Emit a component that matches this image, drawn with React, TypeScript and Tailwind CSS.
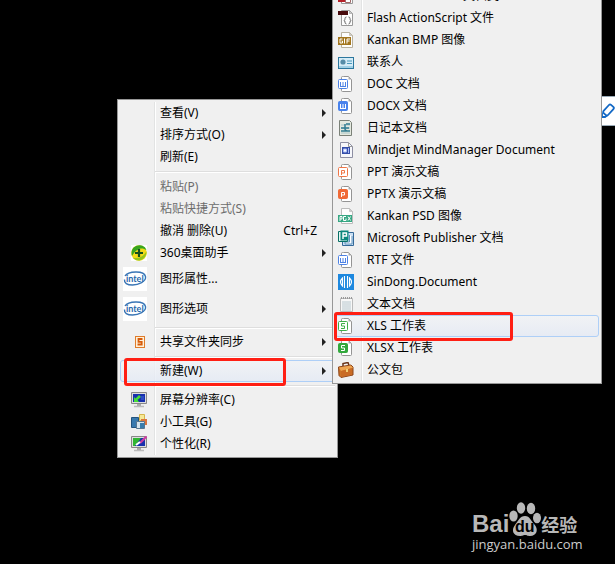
import React from "react";

type IconName =
  | "shield" | "intel" | "sync" | "monitor" | "gadget" | "personalize"
  | "flashRed" | "flashScript" | "gif" | "contact" | "doc" | "docx" | "journal"
  | "mind" | "ppt" | "pptx" | "psd" | "publisher" | "sindong" | "text"
  | "xls" | "xlsx" | "briefcase";

type Item = {
  label?: string;
  icon?: IconName;
  arrow?: boolean;
  disabled?: boolean;
  active?: boolean;
  tall?: boolean;
  shortcut?: string;
  separator?: "normal" | "wide";
};

const desktopMenu: Item[] = [
  { label: "查看(V)", arrow: true },
  { label: "排序方式(O)", arrow: true },
  { label: "刷新(E)" },
  { separator: "wide" },
  { label: "粘贴(P)", disabled: true },
  { label: "粘贴快捷方式(S)", disabled: true },
  { label: "撤消 删除(U)", shortcut: "Ctrl+Z" },
  { label: "360桌面助手", icon: "shield", arrow: true },
  { label: "图形属性...", icon: "intel", tall: true },
  { label: "图形选项", icon: "intel", tall: true, arrow: true },
  { separator: "normal" },
  { label: "共享文件夹同步", icon: "sync", arrow: true },
  { separator: "normal" },
  { label: "新建(W)", arrow: true, active: true },
  { separator: "normal" },
  { label: "屏幕分辨率(C)", icon: "monitor" },
  { label: "小工具(G)", icon: "gadget" },
  { label: "个性化(R)", icon: "personalize" },
];

const newMenu: Item[] = [
  { label: "Adobe Flash CS6 文档类", icon: "flashRed" },
  { label: "Flash ActionScript 文件", icon: "flashScript" },
  { label: "Kankan BMP 图像", icon: "gif" },
  { label: "联系人", icon: "contact" },
  { label: "DOC 文档", icon: "doc" },
  { label: "DOCX 文档", icon: "docx" },
  { label: "日记本文档", icon: "journal" },
  { label: "Mindjet MindManager Document", icon: "mind" },
  { label: "PPT 演示文稿", icon: "ppt" },
  { label: "PPTX 演示文稿", icon: "pptx" },
  { label: "Kankan PSD 图像", icon: "psd" },
  { label: "Microsoft Publisher 文档", icon: "publisher" },
  { label: "RTF 文件", icon: "doc" },
  { label: "SinDong.Document", icon: "sindong" },
  { label: "文本文档", icon: "text" },
  { label: "XLS 工作表", icon: "xls", active: true },
  { label: "XLSX 工作表", icon: "xlsx" },
  { label: "公文包", icon: "briefcase" },
];

const Page = ({ edge = "#999" }: { edge?: string }) => (
  <>
    <path d="M3.500 .5h8l3 3v12h-11z" fill="#fdfdfd" stroke={edge} />
    <path d="M11.500 .5v3h3z" fill="#ccc" stroke={edge} strokeWidth=".6" />
  </>
);

const glyphs = {
  W: "M2.500 6v4M5 6v4M7.500 6v4M2 10.500h6",
  P: "M3.500 11V6.500h3v2.500h-3",
  S: "M7 5.500H3.500v2.500H6.500v2.500H3",
};

function OfficeIcon({ letter, color, solid }: { letter: "W" | "P" | "S"; color: string; solid?: boolean }) {
  return (
    <>
      <path d="M5.500 .5h5l3 3v11q0 1-1 1h-8q-1 0-1-1v-13q0-1 1-1z" fill="#fff" stroke="#949494" />
      <path d="M10.500 .5v3h3z" fill="#aaa" />
      <rect x=".5" y="3.500" width="9" height="9" rx="1" fill={solid ? color : "#fff"} stroke={color} />
      <path d={glyphs[letter]} fill="none" stroke={solid ? "#fff" : color} strokeWidth="1" />
    </>
  );
}

function Screen() {
  return (
    <>
      <path d="M.5 .5h15v11H.5z" fill="#ddd" stroke="#888" />
      <path d="M2 2h12v8H2z" fill="#1730ad" />
      <path d="M6 12h4v2H6z" fill="#aaa" />
      <path d="M3 14.500h10" stroke="#bbb" strokeWidth="1.500" />
    </>
  );
}

function Icon({ name }: { name: IconName }) {
  if (name === "intel") {
    return (
      <svg viewBox="0 0 24 24" className="size-6 bg-white" aria-hidden="true">
        <path d="M2 9C5 4 21 3 22.500 9.500c1 5-7 8.500-13 8.500C4 18 1 16 1.500 12.500" fill="none" stroke="#3975b5" strokeWidth="1.400" />
        <text x="3" y="15" fontSize="9" fontWeight="700" fontFamily="Lato, sans-serif" fill="#2868ac">intel</text>
      </svg>
    );
  }
  const art: Record<Exclude<IconName, "intel">, React.ReactNode> = {
    shield: (
      <>
        <path d="M0 0h16v16H0z" fill="#fff" />
        <circle cx="8" cy="8" r="7.800" fill="#f2da17" />
        <path d="M1 11C-1 4 4 0 9 .3c4 .2 6 3 6.500 5C11 2 6 3 1 11z" fill="#38a51e" />
        <path d="M15.600 6c0 6-4 9.500-8 9.500-3 0-5-2-6-3 6 2 11-1 14-6.500z" fill="#94c51b" />
        <path d="M8 4v8M4 8h8" stroke="#134f1d" strokeWidth="2.200" />
      </>
    ),
    sync: (
      <>
        <rect x="4.500" y="2.500" width="9" height="11" fill="#fff0d8" stroke="#df7c2a" />
        <path d="M11.500 5H7.500v2.800h3.200v2.700H6.500" fill="none" stroke="#d75c0b" strokeWidth="1.800" />
      </>
    ),
    monitor: <><Screen /><path d="M3 10V5l1.500 1.500L8 3l2 2-3.500 3L8 10z" fill="#45df35" /><path d="M10 5h3M10 7h3" stroke="#4568da" /></>,
    gadget: (
      <>
        <path d="M.5 3.500h7v10h-7z" fill="#3979ae" stroke="#24547e" />
        <path d="M8.500 .5h5v6h-5z" fill="#f5e898" stroke="#d6b64c" />
        <path d="M10 5h6v6h-6z" fill="#dc763e" />
        <path d="M5.500 7.500h8v7h-8z" fill="#d4e3ed" stroke="#587791" />
        <path d="M9 9h4v5H9z" fill="#397dad" />
      </>
    ),
    personalize: <><Screen /><path d="M2 2h8l-6 8H2z" fill="#2fb533" /><path d="M15.500 .5L9 7" stroke="#cb3ca2" strokeWidth="2.200" /><path d="M9 6L5 9" stroke="#fff" strokeWidth="2" /></>,
    flashRed: (
      <>
        <Page />
        <path d="M0 2h10v12H0z" fill="#b52128" />
        <path d="M7.500 8.500h5v6h-5z" fill="#fff" stroke="#a06a6a" />
      </>
    ),
    flashScript: (
      <>
        <Page />
        <path d="M0 1h10v4H0z" fill="#470a0c" />
        <path d="M8.500 7Q7 7 7 8.500T6 10.500Q7 10.500 7 12.200T8.500 14M10.500 7Q12 7 12 8.500T13 10.500Q12 10.500 12 12.200T10.500 14" fill="none" stroke="#666" />
      </>
    ),
    gif: (
      <>
        <Page edge="#b8b19f" />
        <path d="M0 5h13v8H0z" fill="#a3761e" />
        <path d="M4.500 7H2v4h2.500V9H3.500M6.500 6.500v5M9 11.500V7h3M9 9h2.500" fill="none" stroke="#fff" />
      </>
    ),
    contact: (
      <>
        <rect x=".5" y="3.500" width="15" height="11" fill="#d5ecf7" stroke="#2c779e" />
        <circle cx="5" cy="8" r="2.600" fill="#558ca8" />
        <path d="M9 7h5M9 9.500h5" stroke="#4a98bb" /><path d="M1 13h14" stroke="#6db3d2" />
      </>
    ),
    doc: <OfficeIcon letter="W" color="#4d82e5" />,
    docx: <OfficeIcon letter="W" color="#4882ec" solid />,
    journal: (
      <>
        <path d="M1.500 .5h10l2 2v13h-12z" fill="#e4e9df" stroke="#7b8178" />
        <path d="M3 5h9M3 8h9M3 13h9" stroke="#a7c4c7" />
        <path d="M12 4H8M3 8h8M7 4v5q0 2 4 2M3 11h9" fill="none" stroke="#317c91" strokeWidth="1.500" />
      </>
    ),
    mind: <><path d="M2.500 .5h8l4 4v11h-12z" fill="#f6f7fb" stroke="#8d8fa3" /><path d="M10.500 .5v4h4" fill="none" stroke="#999" /><path d="M4 5h8v7H4z" fill="#344eaa" /><path d="M5.500 7h3v3h-3zM10.500 6v5" fill="#fff" stroke="#a9baf5" /></>,
    ppt: <OfficeIcon letter="P" color="#ef7647" />,
    pptx: <OfficeIcon letter="P" color="#f06a37" solid />,
    psd: (
      <>
        <Page edge="#bbb" />
        <path d="M0 7h14v7H0z" fill="#36a783" />
        <path d="M2 13V8.500h2V11H2M8 8.500H5.500v4H8v-2M10 8.500l2.500 4M12.500 8.500l-2.500 4" fill="none" stroke="#fff" />
      </>
    ),
    publisher: (
      <>
        <path d="M5.500 2.500h10v13h-11v-4" fill="#cbe0f4" stroke="#356999" />
        <path d="M11.500 5v7H7v2h7V6" fill="#fff" stroke="#5d91bd" />
        <path d="M.5 1.500h9v10h-9z" fill="#e5f5f2" stroke="#087065" />
        <path d="M2.500 .5h8v10h-8z" fill="#0c877c" />
        <path d="M5 9V3h3.500v3H5" fill="none" stroke="#fff" strokeWidth="1.400" />
      </>
    ),
    sindong: (
      <>
        <path d="M0 0h16v16H0z" fill="#1d88df" />
        <path d="M6.500 2v12M9.500 2v12M4.500 4Q.5 8 4.500 12zM11.500 4q4 4 0 8z" fill="none" stroke="#fff" strokeWidth="1.100" />
      </>
    ),
    text: (
      <>
        <path d="M2.500 2.500h12v13h-12z" fill="#f7f7f7" stroke="#bbb" />
        <path d="M4 6h9M4 8h9M4 10h9M4 12h9M4 14h9" stroke="#b8c8cf" />
        <path d="M3 2h11" stroke="#999" strokeWidth="2" strokeDasharray="1 1" />
      </>
    ),
    xls: <OfficeIcon letter="S" color="#3eaf48" />,
    xlsx: <OfficeIcon letter="S" color="#32a83d" solid />,
    briefcase: (
      <>
        <path d="M5 4V1.500l5-1 1 3" fill="none" stroke="#6b351a" strokeWidth="1.500" />
        <path d="M.5 5L13 3l2 2v8L3 15.500l-2-2z" fill="#cc7427" stroke="#8b4319" />
        <path d="M1 5.500l12-2 2 2.500-12 3z" fill="#eda552" />
        <path d="M3 9v6l11-2V6z" fill="#c96b24" /><path d="M8 7h2v3H8z" fill="#f0ce74" />
      </>
    ),
  };
  return <svg viewBox="0 0 16 16" className="size-4" aria-hidden="true">{art[name]}</svg>;
}

function MenuRow({ item, sub }: { item: Item; sub?: boolean }) {
  if (item.separator) {
    return (
      <li role="separator" className={`flex items-center pl-[35px] ${item.separator === "wide" ? "h-[8px]" : "h-[7px]"}`}>
        <div className="h-[2px] w-full border-t border-[#dedede] bg-white" />
      </li>
    );
  }
  return (
    <li role="none">
      <button
        type="button"
        role="menuitem"
        disabled={item.disabled}
        className={`flex w-full items-center rounded-[3px] border text-left whitespace-pre ${item.tall ? "h-[30px]" : "h-[22px]"} ${
          item.active ? "border-[#aecff7] bg-linear-to-b from-[#f1f3f6]/80 to-[#e4eaf5]/80" : "border-transparent"
        } ${item.disabled ? "text-[#6d6d6d]" : "text-black"}`}
      >
        <span className={`flex shrink-0 items-center ${sub ? "w-[31px] pl-[2px]" : "w-[39px] justify-end pr-[13px]"}`}>
          {item.icon && <Icon name={item.icon} />}
        </span>
        <span className="grow">{item.label}</span>
        {item.shortcut && <span className="pr-[17px]">{item.shortcut}</span>}
        {item.arrow && (
          <svg viewBox="0 0 4 8" className="mr-2 h-2 w-1" aria-hidden="true"><path d="M0 0l4 4-4 4z" fill="#222" /></svg>
        )}
      </button>
    </li>
  );
}

function Menu({ items, label, sub }: { items: Item[]; label: string; sub?: boolean }) {
  return (
    <div className="relative border border-[#979797] bg-[#f0f0f0] p-[2px]">
      <div className={`absolute inset-y-[2px] w-[2px] border-l border-[#e2e3e3] bg-white ${sub ? "left-[28px]" : "left-[36px]"}`} />
      <ul role="menu" aria-label={label} className="relative">
        {items.map((item, i) => <MenuRow key={i} item={item} sub={sub} />)}
      </ul>
    </div>
  );
}

function Watermark() {
  return (
    <div className="absolute right-[34px] bottom-[13px] w-[109px] text-[#b8b8b8]">
      <div className="flex h-[38px] items-end">
        <span className="font-['Liberation_Sans'] text-[24px] leading-[26px] font-bold">Bai</span>
        <svg viewBox="0 0 32 36" className="h-9 w-8 shrink-0" role="img" aria-label="du">
          <g fill="#b8b8b8">
            <ellipse cx="4.500" cy="15" rx="4.200" ry="5.500" />
            <ellipse cx="12" cy="7" rx="4.200" ry="5.800" />
            <ellipse cx="22" cy="7.500" rx="4.200" ry="5.800" />
            <ellipse cx="28" cy="17" rx="4" ry="5.200" />
            <path d="M16 15c5 0 6 5 9 8 5 5 3 12-4 12-3 0-3-1-5-1s-2 1-5 1c-7 0-9-6-5-11 3-4 5-9 10-9z" />
          </g>
          <text x="6" y="31" fontSize="16" fontWeight="700" fontFamily="Liberation Sans, sans-serif" fill="#000">du</text>
        </svg>
        <span className="text-[18px] leading-[24px] font-bold whitespace-nowrap">经验</span>
      </div>
      <div className="font-['Open_Sans'] text-[13px] leading-[14px] text-[#cccccc]">jingyan.baidu.com</div>
    </div>
  );
}

export default function App() {
  return (
    <main className="relative min-h-screen overflow-hidden bg-black font-['Noto_Sans','Noto_Sans_CJK_SC',sans-serif] text-[12px] leading-[20px]">
      <button type="button" aria-label="编辑" className="absolute top-[96px] left-[601px] flex h-[30px] w-[30px] items-center border-y border-[#9aabb8] bg-white">
        <svg viewBox="0 0 16 16" className="size-4 shrink-0" fill="none" stroke="#1268c5" strokeWidth="1.800" aria-hidden="true">
          <rect x="2" y="4" width="11" height="6" rx="1.500" transform="rotate(-48 7.500 7)" />
          <path d="M1 9.500v4.500h3l2-1.500" />
        </svg>
      </button>
      <div className="absolute top-[99px] left-[117px] w-[221px]"><Menu items={desktopMenu} label="桌面" /></div>
      <div className="absolute top-[-18px] left-[332px] w-[270px]"><Menu items={newMenu} label="新建" sub /></div>
      <div className="pointer-events-none absolute top-[358px] left-[124px] h-[28px] w-[162px] rounded-[3px] border-3 border-[#ff1f14]" />
      <div className="pointer-events-none absolute top-[312px] left-[334px] h-[29px] w-[179px] rounded-[3px] border-3 border-[#ff1f14]" />
      <Watermark />
    </main>
  );
}
